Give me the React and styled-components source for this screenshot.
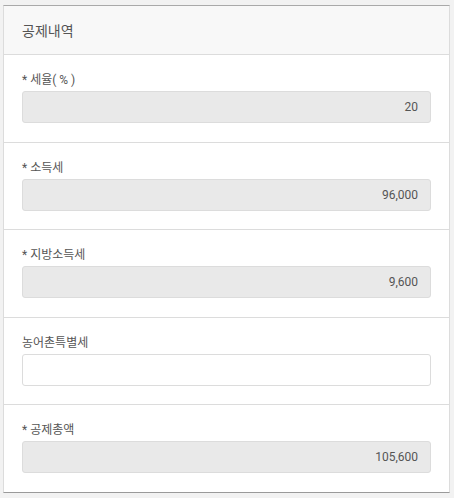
import React from "react";
import styled, { createGlobalStyle } from "styled-components";

const GlobalStyle = createGlobalStyle`
  html, body {
    margin: 0;
    padding: 0;
    background: #f2f2f2;
    font-family: Roboto, "Noto Sans CJK KR", sans-serif;
    color: #333;
  }
  * { box-sizing: border-box; }
`;

const Page = styled.div`
  padding: 5px 4px 0 3px;
  width: 454px;
  height: 498px;
`;

const Card = styled.div`
  background: #fff;
  border: 1px solid #dcdcdc;
  border-top-color: #a9a9a9;
  border-bottom-color: #9a9a9a;
  width: 447px;
`;

const Header = styled.div`
  height: 49px;
  background: #f8f8f8;
  border-bottom: 1px solid #dcdcdc;
  display: flex;
  align-items: center;
  padding-left: 18px;
  font-size: 14px;
  color: #555;
`;

const Section = styled.div`
  padding: 16px 18px 18.5px 18px;
  border-bottom: ${(p) => (p.$last ? "none" : "1px solid #dcdcdc")};
  display: flex;
  flex-direction: column;
`;

const Label = styled.label`
  font-size: 12px;
  font-weight: 400;
  color: #555;
  height: 20px;
  line-height: 18px;
`;

const Field = styled.input`
  height: 32px;
  width: 100%;
  border: 1px solid #dcdcdc;
  border-radius: 3px;
  background: ${(p) => (p.readOnly ? "#e9e9e9" : "#fff")};
  text-align: right;
  padding: 0 12px;
  font-family: Roboto, "Noto Sans CJK KR", sans-serif;
  font-size: 12px;
  color: #555;
  outline: none;
`;

const rows = [
  { label: "* 세율( % )", value: "20", readOnly: true },
  { label: "* 소득세", value: "96,000", readOnly: true },
  { label: "* 지방소득세", value: "9,600", readOnly: true },
  { label: "농어촌특별세", value: "", readOnly: false },
  { label: "* 공제총액", value: "105,600", readOnly: true },
];

export default function App() {
  return (
    <Page>
      <GlobalStyle />
      <Card>
        <Header>공제내역</Header>
        {rows.map((r, i) => (
          <Section key={r.label} $last={i === rows.length - 1}>
            <Label>{r.label}</Label>
            <Field readOnly={r.readOnly} defaultValue={r.value} />
          </Section>
        ))}
      </Card>
    </Page>
  );
}
